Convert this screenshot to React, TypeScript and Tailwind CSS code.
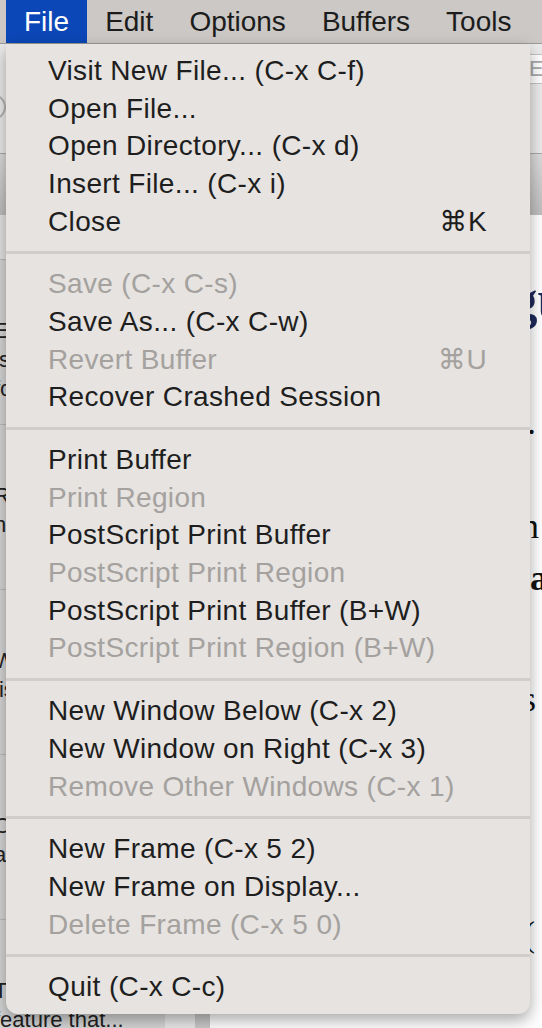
type Item = { label: string; shortcut?: string; disabled?: boolean };

const groups: Item[][] = [
  [
    { label: "Visit New File... (C-x C-f)" },
    { label: "Open File..." },
    { label: "Open Directory... (C-x d)" },
    { label: "Insert File... (C-x i)" },
    { label: "Close", shortcut: "⌘K" },
  ],
  [
    { label: "Save (C-x C-s)", disabled: true },
    { label: "Save As... (C-x C-w)" },
    { label: "Revert Buffer", shortcut: "⌘U", disabled: true },
    { label: "Recover Crashed Session" },
  ],
  [
    { label: "Print Buffer" },
    { label: "Print Region", disabled: true },
    { label: "PostScript Print Buffer" },
    { label: "PostScript Print Region", disabled: true },
    { label: "PostScript Print Buffer (B+W)" },
    { label: "PostScript Print Region (B+W)", disabled: true },
  ],
  [
    { label: "New Window Below (C-x 2)" },
    { label: "New Window on Right (C-x 3)" },
    { label: "Remove Other Windows (C-x 1)", disabled: true },
  ],
  [
    { label: "New Frame (C-x 5 2)" },
    { label: "New Frame on Display..." },
    { label: "Delete Frame (C-x 5 0)", disabled: true },
  ],
  [{ label: "Quit (C-x C-c)" }],
];

const topMenus = ["File", "Edit", "Options", "Buffers", "Tools"];

// sidebar list rows of the window behind the menu; only their edges show
const sidebarRows = [
  ["Emacs a", "is editor", "for power"],
  ["Read on about", "how to c"],
  ["Write the first", "list"],
  ["Open in", "a c"],
  ["The editor", "feature that..."],
];

function MenuBar() {
  return (
    <div className="flex h-[44px] shrink-0 border-b border-[#9d9a97] bg-[#cbc8c5] pl-[6px] text-[28px] leading-[43px] text-[#1c1c1c]">
      {topMenus.map((m, i) => (
        <div
          key={m}
          className={i === 0 ? "bg-[#0b47b6] px-[18px] text-white" : "px-[18px]"}
        >
          {m}
        </div>
      ))}
    </div>
  );
}

function Background() {
  return (
    <div className="flex min-h-0 flex-1 flex-col">
      <div className="flex h-[109px] shrink-0 items-start bg-[#ebebeb] pt-[10px]">
        <div className="ml-[-20px] mt-[40px] h-[26px] w-[26px] rounded-full border-2 border-[#b5b5b5]" />
        <div className="ml-auto mr-[-60px] h-[30px] w-[80px] rounded border border-[#c4c4c4] bg-white px-[6px] text-[22px] leading-[28px] text-[#aaa]">
          Ea
        </div>
      </div>
      <div className="h-[62px] shrink-0 border-t border-[#a9a9a9] bg-gradient-to-b from-[#dcdcdc] to-[#bdbdbd]" />
      <div className="flex min-h-0 flex-1">
        <div className="flex w-[165px] shrink-0 flex-col bg-[#d6d6d6]">
          <div className="h-[45px] shrink-0 border-b border-[#bdbdbd] bg-[#e4e4e4]" />
          {sidebarRows.map((r, i) => (
            <div
              key={i}
              className="flex h-[165px] shrink-0 flex-col border-b border-[#bdbdbd] pt-[56px] text-[22px] leading-[29px] text-[#222]"
            >
              {r.map((line) => (
                <span key={line} className="ml-[-6px] whitespace-nowrap">
                  {line}
                </span>
              ))}
            </div>
          ))}
        </div>
        <div className="flex w-[45px] shrink-0">
          <div className="w-[30px] bg-[#e9e9e9]" />
          <div className="w-[15px] bg-[#c9c9c9]" />
        </div>
        <div className="flex-1 overflow-hidden bg-white pl-[20px] pt-[55px] font-['Liberation_Serif',serif] text-[36px] text-[#111]">
          <div className="whitespace-nowrap text-[54px] font-bold leading-[60px] text-[#1f2a5a]">
            Emacs configurinng
          </div>
          <div className="mt-[66px] leading-[52px]">
            <div className="whitespace-nowrap">This section covers t.</div>
            <div className="whitespace-nowrap">how the menu bar D</div>
            <div className="whitespace-nowrap">is used to open file in</div>
            <div className="whitespace-nowrap font-bold">and save buffers in a</div>
          </div>
          <div className="mt-[68px] leading-[55px]">
            <div className="whitespace-nowrap">Frames and windows o</div>
            <div className="whitespace-nowrap">can be split and ru</div>
            <div className="whitespace-nowrap">arranged in many a</div>
          </div>
          <div className="mt-[72px] leading-[50px]">
            <div className="whitespace-nowrap">Printing works well (</div>
            <div className="whitespace-nowrap">with a PostScript a</div>
          </div>
        </div>
      </div>
    </div>
  );
}

function FileMenu() {
  return (
    <div className="absolute left-[6px] top-[44px] flex w-[524px] flex-col rounded-b-[12px] bg-[#e6e3e0] py-[8px] text-[28px] tracking-[0.35px] shadow-[0_6px_16px_rgba(0,0,0,0.35)]">
      {groups.map((g, gi) => (
        <div key={gi} className="flex flex-col">
          {gi > 0 && <div className="my-[11px] h-[3px] bg-[#d0cdca]" />}
          {g.map((it) => (
            <div
              key={it.label}
              className={
                "flex h-[37.7px] items-center justify-between pl-[42px] pr-[43px] leading-[38px] " +
                (it.disabled ? "text-[#a4a19e]" : "text-[#1e1e1e]")
              }
            >
              <span className="whitespace-nowrap">{it.label}</span>
              {it.shortcut && <span className="whitespace-nowrap">{it.shortcut}</span>}
            </div>
          ))}
        </div>
      ))}
    </div>
  );
}

export default function App() {
  return (
    <div className="relative flex h-[1028px] w-[542px] flex-col overflow-hidden bg-white font-['Liberation_Sans','DejaVu_Sans',sans-serif]">
      <MenuBar />
      <Background />
      <FileMenu />
    </div>
  );
}
